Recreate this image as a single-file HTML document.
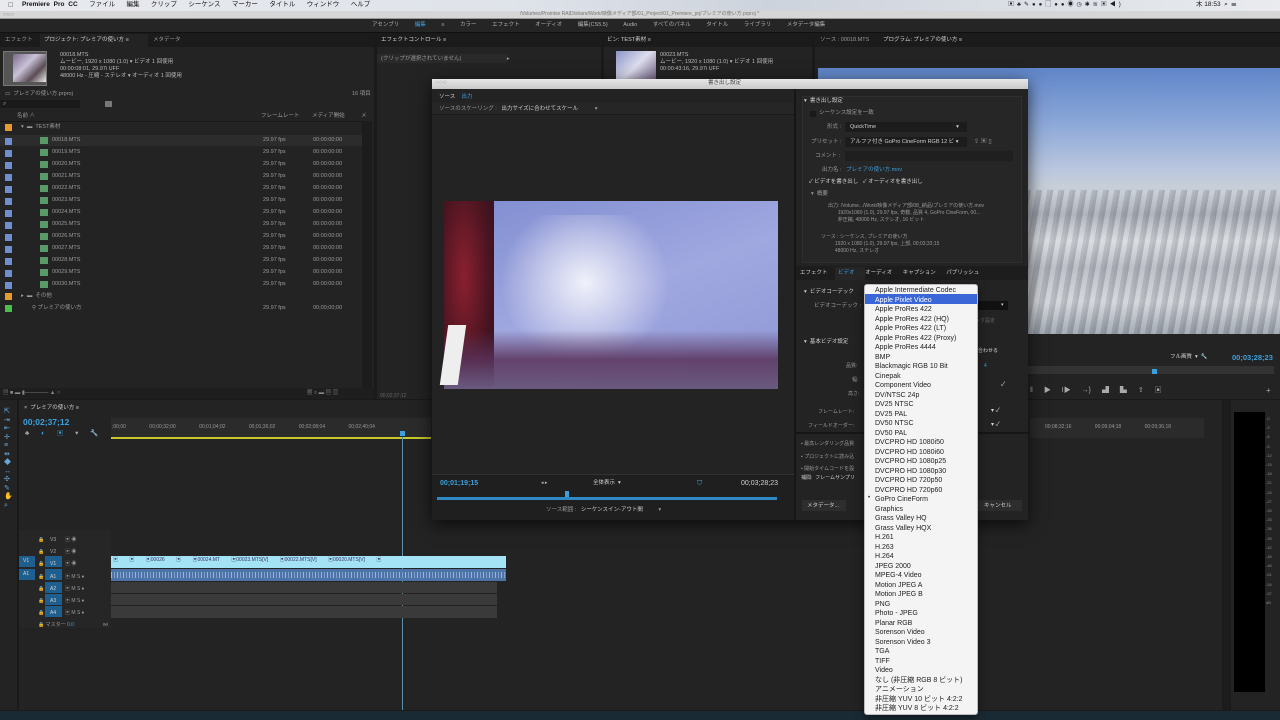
<!DOCTYPE html>
<html><head><meta charset="utf-8"><style>
*{margin:0;padding:0;box-sizing:border-box}
body{width:1280px;height:720px;overflow:hidden;background:#1a1a1a;position:relative;font-family:"Liberation Sans","Noto Sans CJK JP",sans-serif;color:#9a9a9a;font-size:6px}
div{position:absolute}
.t{white-space:nowrap;line-height:1}
.b{color:#3d9fdc}
.w{color:#d0d0d0}
.p{background:#232323}
</style></head><body>
<!-- mac menubar -->
<div style="left:0;top:0;width:1280px;height:11px;background:linear-gradient(90deg,#e8eaee,#dfe3ea 40%,#cdd3dc 60%,#e9ebef)"></div>
<div class="t" style="left:8px;top:2px;font-size:7px;color:#222">&#63743;</div>
<div class="t" style="left:22px;top:2px;font-size:6.5px;color:#111;word-spacing:2px"><b>Premiere Pro CC</b>&nbsp;&nbsp; ファイル&nbsp;&nbsp; 編集&nbsp;&nbsp; クリップ&nbsp;&nbsp; シーケンス&nbsp;&nbsp; マーカー&nbsp;&nbsp; タイトル&nbsp;&nbsp; ウィンドウ&nbsp;&nbsp; ヘルプ</div>
<div class="t" style="left:1008px;top:2px;font-size:6px;color:#222;letter-spacing:3px">▣♣✎●●▢●●◉◷✱≋▣◀)</div>
<div class="t" style="left:1196px;top:2px;font-size:6.5px;color:#111">木 18:53 &nbsp;⌕ &nbsp;☰</div>
<!-- title bar -->
<div style="left:0;top:11px;width:1280px;height:8px;background:#d6d6d6;border-bottom:1px solid #999"></div>
<div class="t" style="left:3px;top:12px;font-size:6px;color:#888">○○○</div>
<div class="t" style="left:520px;top:12px;font-size:5px;color:#777">/Volumes/Promise RAID/share/Work/映像メディア部/01_Project/01_Premiere_prj/プレミアの使い方.prproj *</div>
<!-- workspace bar -->
<div style="left:0;top:19px;width:1280px;height:14px;background:#252525;border-bottom:1px solid #111"></div>
<div class="t" style="left:372px;top:23px;font-size:5.5px;color:#b0b0b0;word-spacing:14px">アセンブリ <span class="b">編集</span> ≡ カラー エフェクト オーディオ 編集(CS5.5) Audio すべてのパネル タイトル ライブラリ メタデータ編集</div>
<!-- project panel -->
<div class="p" style="left:0;top:34px;width:374px;height:365px"></div>
<div style="left:0;top:34px;width:374px;height:13px;background:#1b1b1b"></div>
<div style="left:40px;top:34px;width:108px;height:13px;background:#232323"></div>
<div class="t" style="left:5px;top:38px;font-size:5.5px">エフェクト</div>
<div class="t w" style="left:44px;top:38px;font-size:5.5px">プロジェクト: プレミアの使い方 ≡</div>
<div class="t" style="left:153px;top:38px;font-size:5.5px">メタデータ</div>
<div style="left:3px;top:51px;width:44px;height:35px;background:#555;border:1px solid #777"></div>
<div style="left:13px;top:54px;width:33px;height:28px;background:linear-gradient(135deg,#7a6a8a,#c9c2d8 40%,#5b4c55 70%,#eee)"></div>
<div class="t" style="left:60px;top:52px;font-size:5.5px;line-height:7px;color:#bbb">00018.MTS<br>ムービー, 1920 x 1080 (1.0) ▾ ビデオ 1 回使用<br>00:00:08:01, 29.97i UFF<br>48000 Hz - 圧縮 - ステレオ ▾ オーディオ 1 回使用</div>
<div class="t" style="left:5px;top:92px;font-size:5.5px">▭ &nbsp;プレミアの使い方.prproj</div>
<div class="t" style="left:352px;top:92px;font-size:5.5px">16 項目</div>
<div style="left:0;top:100px;width:80px;height:8px;background:#1a1a1a"></div>
<div class="t" style="left:3px;top:101px;font-size:6px">⌕</div>
<div style="left:105px;top:101px;width:7px;height:6px;background:#777"></div>
<div class="t" style="left:17px;top:114px;font-size:5.5px">名前 ∧</div>
<div class="t" style="left:261px;top:114px;font-size:5.5px">フレームレート</div>
<div class="t" style="left:312px;top:114px;font-size:5.5px">メディア開始</div>
<div class="t" style="left:361px;top:114px;font-size:5.5px">メ</div>
<div style="left:0;top:121px;width:362px;height:1px;background:#181818"></div>
<div style="left:362px;top:121px;width:10px;height:272px;background:#1c1c1c"></div>
<div style="left:5px;top:124px;width:7px;height:7px;background:#e79a2e"></div>
<div class="t" style="left:21px;top:125px;font-size:5.5px">▾ &nbsp;▬ &nbsp;TEST素材</div>
<div style="left:0;top:135px;width:362px;height:11px;background:#2c2c2c"></div>
<div id="rows"></div>
<div style="left:5px;top:293px;width:7px;height:7px;background:#e79a2e"></div>
<div class="t" style="left:21px;top:294px;font-size:5.5px">▸ &nbsp;▬ &nbsp;その他</div>
<div style="left:5px;top:305px;width:7px;height:7px;background:#4bbf4b"></div>
<div class="t" style="left:32px;top:306px;font-size:5.5px">⚲ プレミアの使い方</div>
<div class="t" style="left:263px;top:306px;font-size:5.5px">29.97 fps</div>
<div class="t" style="left:313px;top:306px;font-size:5.5px">00;00;00;00</div>
<div style="left:0;top:388px;width:374px;height:11px;background:#1e1e1e"></div>
<div class="t" style="left:3px;top:391px;font-size:5.5px;color:#888">▤ ■ ▬ ▮────── ▲ ○</div>
<div class="t" style="left:307px;top:391px;font-size:5.5px;color:#888">▦ ⌕ ▬ ▤ ▥</div>
<!-- effect controls -->
<div class="p" style="left:377px;top:34px;width:224px;height:365px"></div>
<div style="left:377px;top:34px;width:224px;height:13px;background:#1b1b1b"></div>
<div class="t w" style="left:381px;top:38px;font-size:5.5px">エフェクトコントロール ≡</div>
<div style="left:377px;top:54px;width:130px;height:9px;background:#2a2a2a"></div>
<div class="t" style="left:381px;top:57px;font-size:5.5px">(クリップが選択されていません) <span style="margin-left:44px">▸</span></div>
<div class="t" style="left:380px;top:394px;font-size:5px;color:#666">00;02;37;12</div>
<!-- bin -->
<div class="p" style="left:604px;top:34px;width:208px;height:365px"></div>
<div style="left:604px;top:34px;width:208px;height:13px;background:#1b1b1b"></div>
<div class="t w" style="left:607px;top:38px;font-size:5.5px">ビン: TEST素材 ≡</div>
<div style="left:616px;top:51px;width:40px;height:30px;background:linear-gradient(135deg,#8a95c8,#dde 50%,#6a5a7a)"></div>
<div class="t" style="left:660px;top:52px;font-size:5.5px;line-height:7px;color:#bbb">00023.MTS<br>ムービー, 1920 x 1080 (1.0) ▾ ビデオ 1 回使用<br>00:00:43:16, 29.97i UFF</div>
<!-- program monitor -->
<div class="p" style="left:815px;top:34px;width:465px;height:365px"></div>
<div style="left:815px;top:34px;width:465px;height:13px;background:#1b1b1b"></div>
<div class="t" style="left:820px;top:38px;font-size:5.5px">ソース : 00018.MTS</div>
<div class="t w" style="left:883px;top:38px;font-size:5.5px">プログラム: プレミアの使い方 ≡</div>
<div style="left:818px;top:68px;width:462px;height:266px;background:linear-gradient(180deg,#5f85c8 0%,#8aa6d8 20%,#b9c6de 38%,#c8cfd8 45%,#a6abb4 55%,#d6d9de 65%,#b4b8c0 75%,#cfd2d8 88%,#9aa2ac 100%)"></div>
<div style="left:1028px;top:190px;width:252px;height:144px;background:repeating-linear-gradient(100deg,rgba(60,60,70,.18) 0 3px,rgba(255,255,255,.12) 3px 8px,rgba(80,80,90,.15) 8px 11px)"></div>
<div class="t w" style="left:1170px;top:355px;font-size:5.5px">フル画質 &nbsp;▾ &nbsp;🔧</div>
<div class="t b" style="left:1232px;top:354px;font-size:7.5px;font-weight:bold">00;03;28;23</div>
<div style="left:1028px;top:366px;width:246px;height:8px;background:#333"></div>
<div style="left:1152px;top:369px;width:5px;height:5px;background:#3d9fdc"></div>
<div class="t" style="left:1030px;top:387px;font-size:7px;color:#aaa;word-spacing:9px">‖ ▶ I▶ →} ▟ ▙ ⇪ ▣</div>
<div class="t" style="left:1266px;top:387px;font-size:8px;color:#aaa">+</div>
<!-- timeline -->
<div style="left:0;top:400px;width:17px;height:310px;background:#232323"></div>
<div class="t" style="left:4px;top:408px;font-size:7px;color:#6aa6d8;line-height:8.5px">⇱<br>⇥<br>⇤<br>✛<br>≡<br>⇹<br>◆<br>↔<br>✣<br>✎<br>✋<br>⌕</div>
<div class="p" style="left:19px;top:400px;width:1211px;height:310px"></div>
<div class="t w" style="left:24px;top:406px;font-size:5.5px">× &nbsp;プレミアの使い方 ≡</div>
<div class="t b" style="left:23px;top:418px;font-size:8.5px;font-weight:bold">00;02;37;12</div>
<div class="t" style="left:25px;top:431px;font-size:6.5px;color:#aaa;word-spacing:10px">♣ <span class="b">◐</span> <span class="b">▣</span> ▾ 🔧</div>
<div style="left:111px;top:418px;width:320px;height:20px;background:#2b2b2b"></div>
<div style="left:1030px;top:418px;width:174px;height:20px;background:#2b2b2b"></div>
<div style="left:111px;top:437px;width:320px;height:2px;background:#c8c828"></div>
<div class="t" style="left:112px;top:425px;font-size:5px;color:#999;word-spacing:22px">;00;00 00;00;32;00 00;01;04;02 00;01;36;02 00;02;08;04 00;02;40;04</div>
<div class="t" style="left:1045px;top:425px;font-size:5px;color:#999;word-spacing:22px">00;08;32;16 00;09;04;18 00;09;36;18</div>
<div style="left:400px;top:431px;width:5px;height:5px;background:#3d9fdc"></div>
<div style="left:402px;top:437px;width:1px;height:273px;background:#5a8fb0"></div>
<div style="left:19px;top:530px;width:92px;height:98px;background:#262626"></div>
<div style="left:19px;top:556px;width:16px;height:11px;background:#1f5f8f"></div>
<div style="left:19px;top:569px;width:16px;height:11px;background:#1f5f8f"></div>
<div style="left:45px;top:556px;width:17px;height:11px;background:#1f5f8f"></div>
<div style="left:45px;top:569px;width:17px;height:11px;background:#1f5f8f"></div>
<div style="left:45px;top:582px;width:17px;height:11px;background:#1f5f8f"></div>
<div style="left:45px;top:594px;width:17px;height:11px;background:#1f5f8f"></div>
<div style="left:45px;top:606px;width:17px;height:11px;background:#1f5f8f"></div>
<div class="t" style="left:38px;top:534px;font-size:5px;line-height:12.2px;color:#999">🔒<br>🔒<br>🔒<br>🔒<br>🔒<br>🔒<br>🔒<br>🔒 マスター <span class="b">0.0</span></div>
<div class="t" style="left:50px;top:534px;font-size:5px;line-height:12.2px;color:#aaa">V3<br>V2<br><span class="w">V1</span><br><span class="w">A1</span><br><span class="w">A2</span><br><span class="w">A3</span><br><span class="w">A4</span></div>
<div class="t" style="left:65px;top:534px;font-size:5px;line-height:12.2px;color:#999">▣ ◉<br>▣ ◉<br>▣ ◉<br>▣ M S ♦<br>▣ M S ♦<br>▣ M S ♦<br>▣ M S ♦<br><span style="margin-left:38px">⋈</span></div>
<div class="t w" style="left:23px;top:559px;font-size:5px">V1</div>
<div class="t w" style="left:23px;top:572px;font-size:5px">A1</div>
<div style="left:111px;top:556px;width:395px;height:12px;background:#a4e2f6"></div>
<div class="t" style="left:113px;top:558px;font-size:5px;color:#336;word-spacing:10px">▣ ▣ ▣00026 ▣ ▣00024.MT ▣00023.MTS[V] ▣00022.MTS[V] ▣00020.MTS[V] ▣</div>
<div style="left:111px;top:569px;width:395px;height:12px;background:#4e73a6"></div>
<div style="left:111px;top:572px;width:395px;height:6px;background:repeating-linear-gradient(90deg,#9ab8dd 0 1px,transparent 1px 3px,#7ea0cc 3px 4px,transparent 4px 6px)"></div>
<div style="left:111px;top:582px;width:386px;height:11px;background:#3a3a3a"></div>
<div style="left:111px;top:594px;width:386px;height:11px;background:#3a3a3a"></div>
<div style="left:111px;top:606px;width:386px;height:12px;background:#3a3a3a"></div>
<div style="left:1222px;top:400px;width:8px;height:310px;background:#1c1c1c"></div>
<!-- audio meter -->
<div style="left:1231px;top:400px;width:49px;height:310px;background:#232323"></div>
<div style="left:1234px;top:412px;width:31px;height:280px;background:#000"></div>
<div class="t" style="left:1266px;top:414px;font-size:4px;color:#888;line-height:9.2px">-0<br>-3<br>-6<br>-9<br>-12<br>-15<br>-18<br>-21<br>-24<br>-27<br>-30<br>-33<br>-36<br>-39<br>-42<br>-45<br>-48<br>-51<br>-54<br>-57<br>dB</div>
<div style="left:0;top:711px;width:1280px;height:9px;background:#1a2a34"></div>
<!-- export dialog -->
<div style="left:432px;top:79px;width:596px;height:441px;background:#232323;box-shadow:0 4px 16px rgba(0,0,0,.7)"></div>
<div style="left:432px;top:79px;width:596px;height:10px;background:linear-gradient(#e6e6e6,#c8c8c8)"></div>
<div class="t" style="left:435px;top:80px;font-size:6.5px;color:#999">○○<span style="color:#5a5">○</span></div>
<div class="t" style="left:708px;top:81px;font-size:5.5px;color:#444">書き出し設定</div>
<div class="t w" style="left:439px;top:95px;font-size:5.5px">ソース &nbsp; &nbsp;<span class="b">出力</span></div>
<div style="left:432px;top:103px;width:362px;height:12px;background:#262626;border-bottom:1px solid #1a1a1a"></div>
<div class="t" style="left:439px;top:107px;font-size:5.5px">ソースのスケーリング : <span class="w" style="margin-left:3px">出力サイズに合わせてスケール</span> <span style="margin-left:15px">▾</span></div>
<div style="left:794px;top:89px;width:2px;height:431px;background:#161616"></div>
<div style="left:444px;top:201px;width:334px;height:188px;background:linear-gradient(160deg,#7f8cd0,#a0a8e0 50%,#8e97d6)"></div>
<div style="left:444px;top:201px;width:50px;height:188px;background:radial-gradient(ellipse at 40% 40%,#8a2030,#4a1420 60%,#2a1020)"></div>
<div style="left:500px;top:215px;width:170px;height:150px;background:radial-gradient(ellipse at 50% 45%,rgba(255,255,255,.85),rgba(230,230,245,.5) 40%,transparent 70%)"></div>
<div style="left:444px;top:330px;width:334px;height:59px;background:linear-gradient(180deg,transparent,rgba(90,50,90,.85) 50%,#6a5a80)"></div>
<div style="left:444px;top:325px;width:18px;height:60px;background:#eee;transform:skewX(-8deg)"></div>
<div style="left:432px;top:474px;width:362px;height:46px;background:#1f1f1f;border-top:1px solid #333"></div>
<div class="t b" style="left:440px;top:480px;font-size:7px;font-weight:bold">00;01;19;15</div>
<div class="t" style="left:541px;top:481px;font-size:5px;color:#bbb">◂ ▸</div>
<div class="t w" style="left:593px;top:481px;font-size:5.5px">全体表示 &nbsp;▾</div>
<div class="t b" style="left:697px;top:480px;font-size:7px">⛉</div>
<div class="t w" style="left:741px;top:480px;font-size:7px">00;03;28;23</div>
<div style="left:437px;top:497px;width:340px;height:3px;background:#2d88c4"></div>
<div style="left:565px;top:491px;width:4px;height:6px;background:#3d9fdc"></div>
<div class="t" style="left:546px;top:508px;font-size:5.5px">ソース範囲 : <span class="w" style="margin-left:3px">シーケンスイン-アウト間</span> <span style="margin-left:14px">▾</span></div>
<!-- right settings -->
<div style="left:802px;top:96px;width:220px;height:167px;background:#262626;border:1px solid #2e2e2e"></div>
<div class="t w" style="left:804px;top:99px;font-size:5.5px">▾ &nbsp;書き出し設定</div>
<div style="left:810px;top:111px;width:6px;height:6px;background:#1a1a1a"></div>
<div class="t" style="left:819px;top:111px;font-size:5.5px">シーケンス設定を一致</div>
<div class="t" style="left:827px;top:125px;font-size:5.5px">形式 :</div>
<div style="left:845px;top:122px;width:122px;height:10px;background:#1c1c1c"></div>
<div class="t w" style="left:850px;top:125px;font-size:5.5px">QuickTime<span style="margin-left:80px">▾</span></div>
<div class="t" style="left:811px;top:140px;font-size:5.5px">プリセット :</div>
<div style="left:845px;top:137px;width:122px;height:10px;background:#1c1c1c"></div>
<div class="t w" style="left:850px;top:140px;font-size:5.5px">アルファ付き GoPro CineForm RGB 12 ビ ▾</div>
<div class="t" style="left:974px;top:139px;font-size:6px;color:#999">⇪ ▣ ▯</div>
<div class="t" style="left:815px;top:154px;font-size:5.5px">コメント :</div>
<div style="left:845px;top:151px;width:168px;height:10px;background:#1f1f1f"></div>
<div class="t" style="left:822px;top:168px;font-size:5.5px">出力名 : <span class="b" style="margin-left:3px">プレミアの使い方.mov</span></div>
<div class="t w" style="left:809px;top:180px;font-size:5.5px">✓ ビデオを書き出し &nbsp; ✓ オーディオを書き出し</div>
<div class="t" style="left:811px;top:192px;font-size:5.5px">▾ &nbsp;概要</div>
<div class="t" style="left:828px;top:203px;font-size:5px;line-height:6.8px">出力: /Volume.../Work/映像メディア部/08_納品/プレミアの使い方.mov<br>&nbsp; &nbsp; &nbsp; &nbsp;1920x1080 (1.0), 29.97 fps, 奇数, 品質 4, GoPro CineForm, 00...<br>&nbsp; &nbsp; &nbsp; &nbsp;非圧縮, 48000 Hz, ステレオ, 16 ビット</div>
<div class="t" style="left:821px;top:234px;font-size:5px;line-height:6.8px">ソース : シーケンス, プレミアの使い方<br>&nbsp; &nbsp; &nbsp; &nbsp; &nbsp; 1920 x 1080 (1.0), 29.97 fps, 上部, 00;03;33;15<br>&nbsp; &nbsp; &nbsp; &nbsp; &nbsp; 48000 Hz, ステレオ</div>
<div style="left:796px;top:266px;width:232px;height:14px;background:#1d1d1d"></div>
<div style="left:835px;top:267px;width:30px;height:13px;background:#262626"></div>
<div class="t w" style="left:800px;top:271px;font-size:5.5px;word-spacing:9px">エフェクト <span class="b">ビデオ</span> オーディオ キャプション パブリッシュ</div>
<div class="t w" style="left:804px;top:290px;font-size:5.5px">▾ &nbsp;ビデオコーデック</div>
<div class="t" style="left:814px;top:304px;font-size:5.5px">ビデオコーデック :</div>
<div style="left:975px;top:301px;width:33px;height:9px;background:#111"></div>
<div class="t" style="left:1001px;top:303px;font-size:5px;color:#ccc">▾</div>
<div class="t" style="left:975px;top:319px;font-size:5px;color:#666">ック設定</div>
<div class="t w" style="left:804px;top:340px;font-size:5.5px">▾ &nbsp;基本ビデオ設定</div>
<div class="t w" style="left:978px;top:349px;font-size:5px">合わせる</div>
<div class="t" style="left:846px;top:364px;font-size:5px">品質:</div>
<div class="t b" style="left:984px;top:364px;font-size:5px">4</div>
<div class="t" style="left:852px;top:378px;font-size:5px">幅:</div>
<div class="t" style="left:848px;top:392px;font-size:5px">高さ:</div>
<div class="t w" style="left:1001px;top:382px;font-size:6px">✓</div>
<div class="t" style="left:818px;top:410px;font-size:5px">フレームレート:</div>
<div class="t" style="left:808px;top:424px;font-size:5px">フィールドオーダー:</div>
<div class="t w" style="left:991px;top:408px;font-size:6px">▾ ✓</div>
<div class="t w" style="left:991px;top:422px;font-size:6px">▾ ✓</div>
<div style="left:796px;top:432px;width:232px;height:2px;background:#161616"></div>
<div class="t" style="left:801px;top:438px;font-size:5px;line-height:12.5px">▪ 最高レンダリング品質<br>▪ プロジェクトに読み込<br>▪ 開始タイムコードを設</div>
<div class="t w" style="left:801px;top:476px;font-size:5px">補間: &nbsp;フレームサンプリ</div>
<div style="left:802px;top:500px;width:44px;height:11px;background:#2d2d2d"></div>
<div class="t w" style="left:807px;top:504px;font-size:5.5px">メタデータ...</div>
<div style="left:975px;top:500px;width:47px;height:11px;background:#2d2d2d"></div>
<div class="t w" style="left:984px;top:504px;font-size:5.5px">キャンセル</div>
<!-- dropdown -->
<div style="left:864px;top:284px;width:114px;height:431px;background:#f4f4f4;border:1px solid #bbb;border-radius:3px;box-shadow:0 3px 10px rgba(0,0,0,.5)"></div>
<div style="left:865px;top:294px;width:112px;height:9.5px;background:#3a66d8"></div>
<div class="t" style="left:875px;top:286px;font-size:7px;line-height:9.5px;color:#222">Apple Intermediate Codec<br><span style="color:#fff">Apple Pixlet Video</span><br>Apple ProRes 422<br>Apple ProRes 422 (HQ)<br>Apple ProRes 422 (LT)<br>Apple ProRes 422 (Proxy)<br>Apple ProRes 4444<br>BMP<br>Blackmagic RGB 10 Bit<br>Cinepak<br>Component Video<br>DV/NTSC 24p<br>DV25 NTSC<br>DV25 PAL<br>DV50 NTSC<br>DV50 PAL<br>DVCPRO HD 1080i50<br>DVCPRO HD 1080i60<br>DVCPRO HD 1080p25<br>DVCPRO HD 1080p30<br>DVCPRO HD 720p50<br>DVCPRO HD 720p60<br>GoPro CineForm<br>Graphics<br>Grass Valley HQ<br>Grass Valley HQX<br>H.261<br>H.263<br>H.264<br>JPEG 2000<br>MPEG-4 Video<br>Motion JPEG A<br>Motion JPEG B<br>PNG<br>Photo - JPEG<br>Planar RGB<br>Sorenson Video<br>Sorenson Video 3<br>TGA<br>TIFF<br>Video<br>なし (非圧縮 RGB 8 ビット)<br>アニメーション<br>非圧縮 YUV 10 ビット 4:2:2<br>非圧縮 YUV 8 ビット 4:2:2</div>
<div class="t" style="left:868px;top:495px;font-size:6px;color:#222">•</div>
<script>
var h='';var n=['18','19','20','21','22','23','24','25','26','27','28','29','30'];
for(var i=0;i<13;i++){var y=137+i*12;
h+='<div style="left:5px;top:'+(y+1)+'px;width:7px;height:7px;background:#6d8fcf"></div>'+
'<div style="left:40px;top:'+y+'px;width:8px;height:7px;background:#5a9a6a"></div>'+
'<div class="t" style="left:52px;top:'+(y+1)+'px;font-size:5.5px">000'+n[i]+'.MTS</div>'+
'<div class="t" style="left:263px;top:'+(y+1)+'px;font-size:5.5px">29.97 fps</div>'+
'<div class="t" style="left:313px;top:'+(y+1)+'px;font-size:5.5px">00:00:00:00</div>';}
document.getElementById('rows').outerHTML=h;
</script>
</body></html>
